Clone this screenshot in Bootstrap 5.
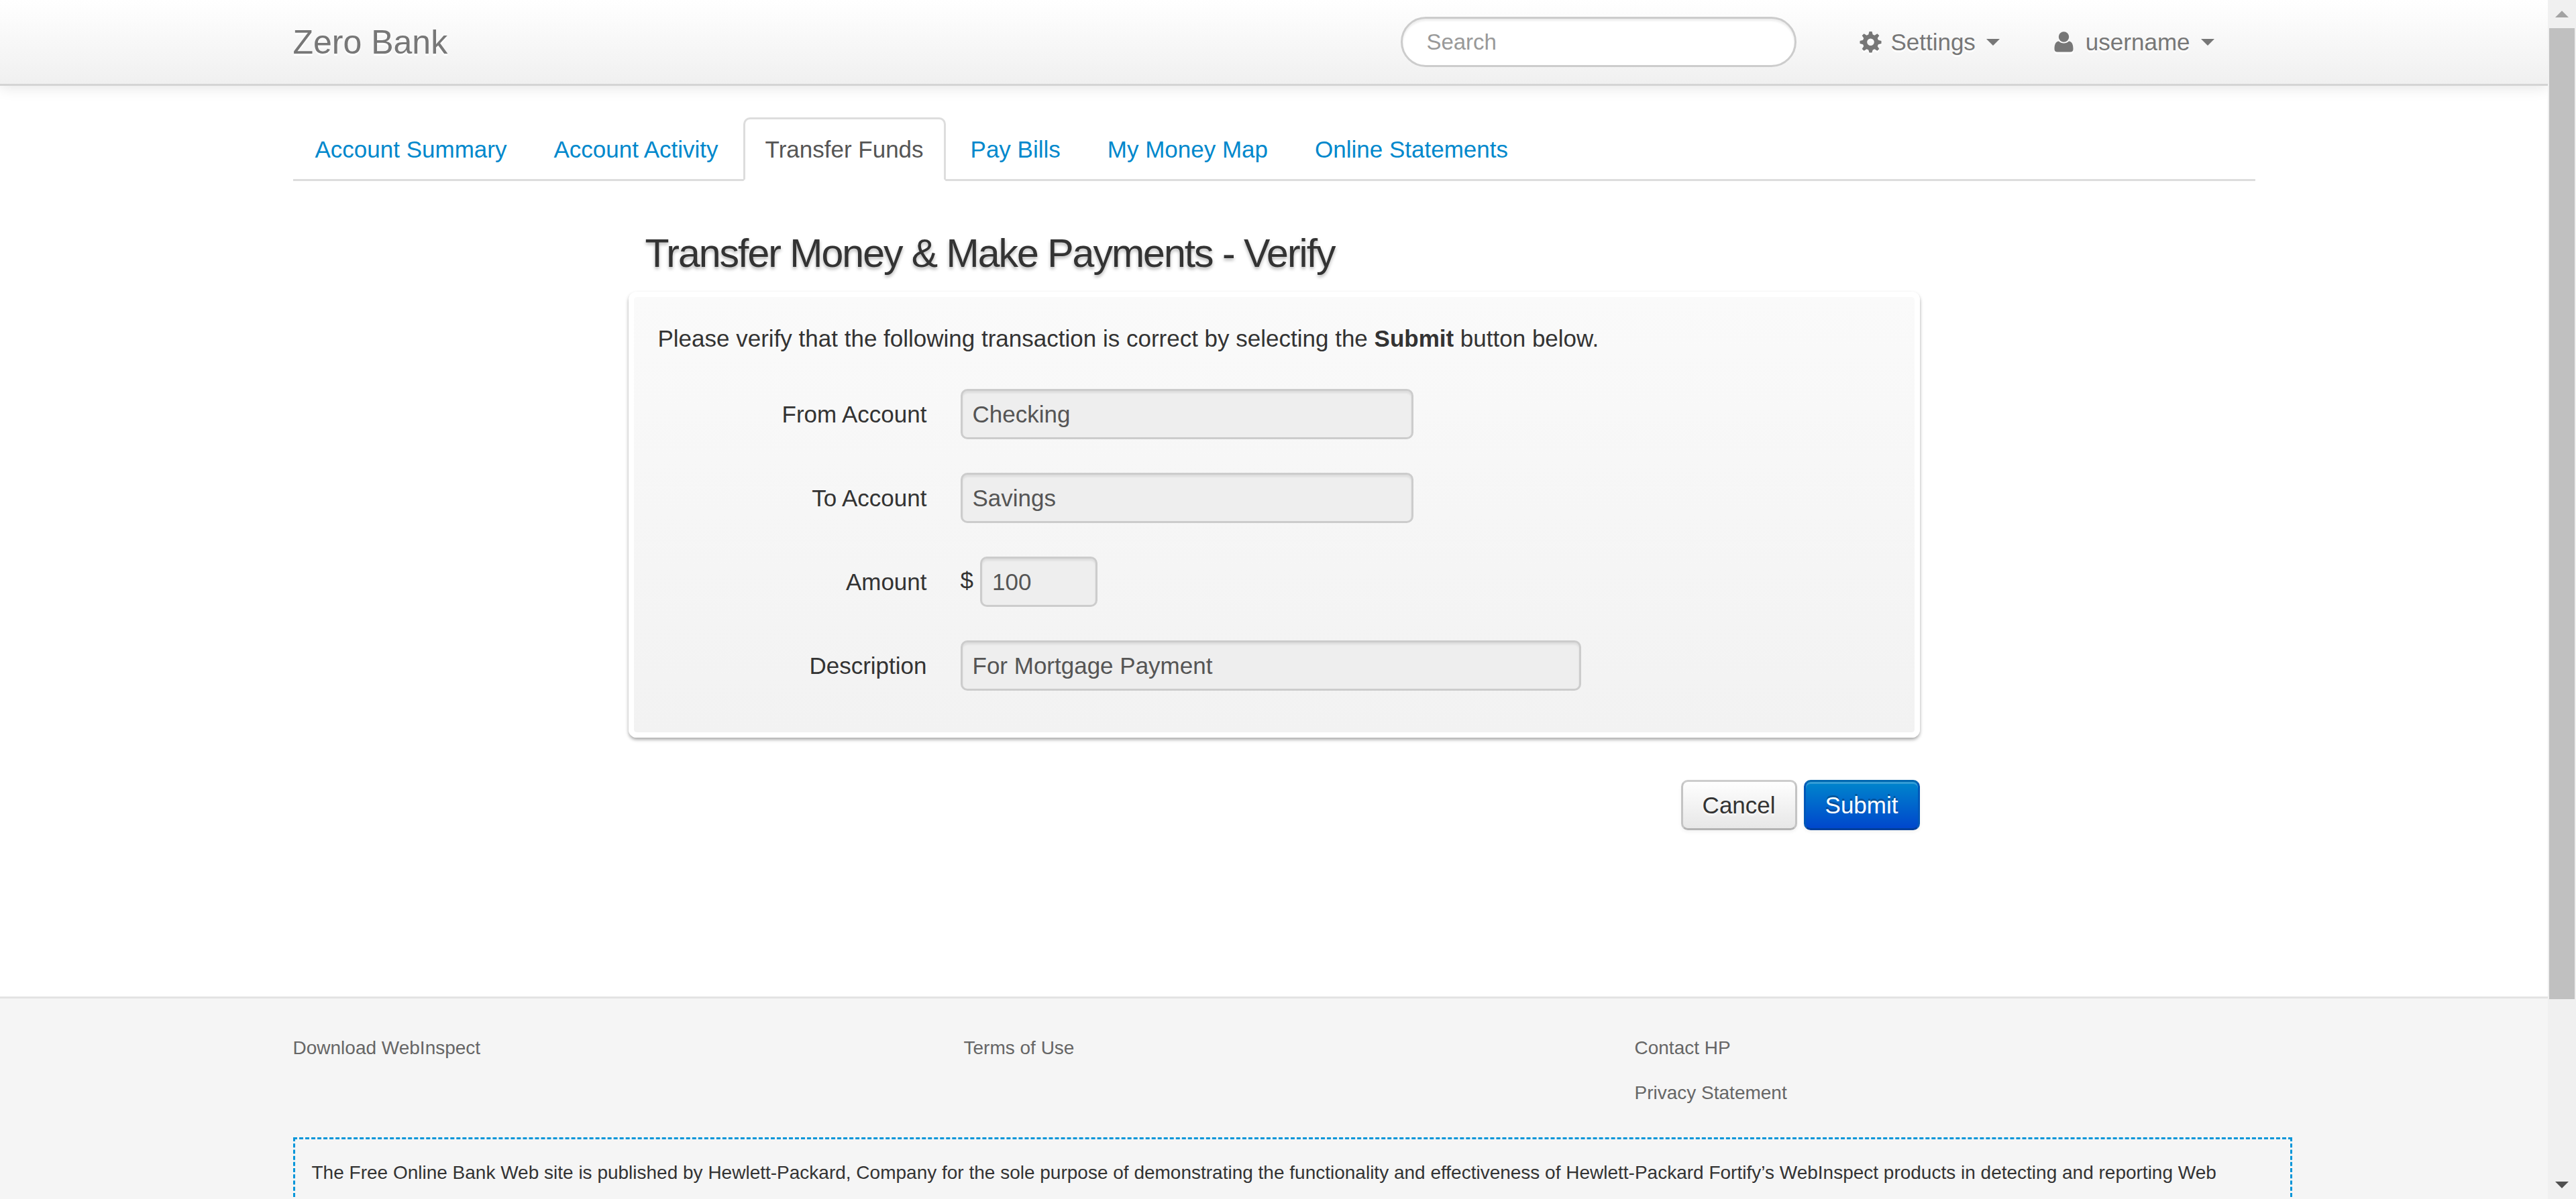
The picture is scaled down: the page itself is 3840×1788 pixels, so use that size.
<!DOCTYPE html>
<html lang="en">
<head>
<meta charset="utf-8">
<meta name="viewport" content="width=device-width, initial-scale=1">
<title>Zero - Transfer Money &amp; Make Payments - Verify</title>
<link href="https://cdn.jsdelivr.net/npm/bootstrap@5.3.0/dist/css/bootstrap.min.css" rel="stylesheet">
<style>
body { font-family: "Liberation Sans", Arial, sans-serif; font-size: 35px; line-height: 50px; color: #333; background: #fff; }
.page-wrap { max-width: 2925px; }
.page-view { min-width: 0; }

/* top bar */
.top-bar { height: 128px; padding: 0; background: linear-gradient(#fff, #f0f0f0); border-bottom: 3px solid #d4d4d4; box-shadow: 0 3px 20px rgba(0,0,0,.1); }
.top-bar .navbar-brand { font-size: 50px; line-height: 50px; padding: 0; color: #777; text-shadow: 0 3px 0 #fff; }
.top-bar .nav-link { color: #777; padding: 0; text-shadow: 0 3px 0 #fff; }
.top-bar svg { width: 35px; height: 35px; fill: #777; filter: drop-shadow(0 3px 0 #fff); }
.top-menu { gap: 77px; padding-right: 61px; }
.top-search { width: 590px; height: 75px; margin-right: 93px; padding: 0 35px; border: 3px solid #ccc; border-radius: 38px; font-size: 33px; box-shadow: inset 0 3px 3px rgba(0,0,0,.075); }
.top-search::placeholder { color: #999; opacity: 1; }
.arrow-down { border: 10px solid transparent; border-top-color: #777; border-bottom: 0; }

/* tabs */
.bank-tabs { margin-top: 47px; gap: 4px; border-bottom: 3px solid #ddd; }
.bank-tabs .nav-link { padding: 20px 30px 19px; margin-bottom: -3px; border: 3px solid transparent; border-radius: 10px 10px 0 0; color: #08c; }
.bank-tabs .nav-link.active { color: #555; border-color: #ddd #ddd #fff; }

/* transfer form */
.transfer { max-width: 1925px; padding-bottom: 248px; }
.transfer h2 { margin: 68px 0 17px; padding-left: 25px; font-size: 59px; font-weight: 400; line-height: 80px; letter-spacing: -2px; text-shadow: 0 3px 5px rgba(0,0,0,.3); }
.board { padding: 37px 36px 62px; border: 8px solid #fff; border-radius: 12px; background: linear-gradient(#fafafa, #f2f2f2) padding-box; box-shadow: 0 3px 5px rgba(0,0,0,.35); }
.board-rows { gap: 50px; }
.board-rows label { width: 401px; margin-right: 50px; text-align: right; }
.board-rows .form-control { height: 75px; padding: 0 15px; border: 3px solid #ccc; border-radius: 10px; font-size: 35px; color: #555; background: #eee; box-shadow: inset 0 3px 3px rgba(0,0,0,.075); }
.board-rows .field-md { width: 675px; }
.board-rows .field-sm { width: 175px; }
.board-rows .field-lg { width: 925px; }
.currency { margin-right: 10px; }
.actions { gap: 10px; margin-top: 63px; }
.actions .btn { padding: 10px 29px 9px; border-width: 3px; border-radius: 10px; font-size: 35px; line-height: 50px; background-origin: border-box; }
.actions .btn-cancel { color: #333; background: linear-gradient(#fff, #e6e6e6) border-box; border-color: #ccc #c4c4c4 #b3b3b3; text-shadow: 0 3px 3px rgba(255,255,255,.75); box-shadow: inset 0 3px 0 rgba(255,255,255,.2), 0 3px 5px rgba(0,0,0,.05); }
.actions .btn-send { color: #fff; background: linear-gradient(#08c, #04c) border-box; border-color: #0067b0 #0058b8 #003f9c; text-shadow: 0 -3px 0 rgba(0,0,0,.25); box-shadow: inset 0 3px 0 rgba(255,255,255,.2), 0 3px 5px rgba(0,0,0,.05); }

/* footer */
.foot { padding-top: 54px; border-top: 3px solid #e3e3e3; background: #f5f5f5; font-size: 28px; line-height: 40px; }
.foot-links { gap: 75px; }
.foot-links ul { flex: 1 1 0; }
.foot-links li { margin-bottom: 27px; }
.foot-links a { color: #666; text-decoration: none; }
.disclaimer { margin: 19px -55px 0 0; padding: 25px 25px 100px; border: 3px dashed #0095d9; line-height: 50px; }

/* window scroll bar */
.scroll-track { width: 42px; background: #f0f0f0; }
.scroll-end { height: 42px; }
.scroll-thumb { height: 81%; margin: 0 2px; background: #c0c0c0; }
.scroll-up { border: 10px solid transparent; border-bottom-color: #a3a3a3; border-top: 0; }
.scroll-down { border: 10px solid transparent; border-top-color: #505050; border-bottom: 0; }
</style>
<script src="https://cdn.jsdelivr.net/npm/bootstrap@5.3.0/dist/js/bootstrap.bundle.min.js"></script>
</head>
<body>
<div class="d-flex vh-100 overflow-hidden">
  <div class="page-view flex-grow-1 overflow-hidden">
    <nav class="navbar top-bar">
      <div class="page-wrap w-100 mx-auto d-flex align-items-center">
        <a class="navbar-brand me-auto" href="#">Zero Bank</a>
        <form role="search">
          <input class="form-control top-search" type="text" aria-label="Search" placeholder="Search">
        </form>
        <ul class="top-menu list-unstyled d-flex mb-0">
          <li><a class="nav-link d-flex align-items-center" href="#">
            <svg class="me-2" viewBox="0 0 35 35" aria-hidden="true"><path fill-rule="evenodd" d="M15.500 2h4l1.200 4.600 2.700 1.100 4-2.500 2.900 2.900-2.500 4 1.100 2.700 4.600 1.200v4l-4.600 1.200-1.100 2.700 2.500 4-2.900 2.900-4-2.500-2.700 1.100-1.200 4.100h-4l-1.200-4.100-2.700-1.100-4 2.500-2.900-2.900 2.500-4-1.100-2.700L1.500 20v-4l4.600-1.200 1.100-2.700-2.500-4 2.900-2.900 4 2.500 2.700-1.100zM17.500 12.500a5.300 5.300 0 1 0 0 10.600 5.300 5.300 0 0 0 0-10.600z"/></svg>
            <span class="ms-1 me-3">Settings</span><span class="arrow-down"></span></a></li>
          <li><a class="nav-link d-flex align-items-center" href="#">
            <svg class="me-2" viewBox="0 0 35 35" aria-hidden="true"><circle cx="18.500" cy="10" r="7.700"/><path d="M11 16.500c2 2 4.500 3 7.500 3s5.500-1 7.500-3c4.500.5 6.500 4.500 6.500 11.500 0 3-1.500 4.500-4.500 4.500H9c-3 0-4.500-1.500-4.500-4.500 0-7 2-11 6.500-11.500z"/></svg>
            <span class="ms-2 me-3">username</span><span class="arrow-down"></span></a></li>
        </ul>
      </div>
    </nav>

    <main class="page-wrap mx-auto">
      <ul class="nav nav-tabs bank-tabs">
        <li class="nav-item"><a class="nav-link" href="#">Account Summary</a></li>
        <li class="nav-item"><a class="nav-link" href="#">Account Activity</a></li>
        <li class="nav-item"><a class="nav-link active" aria-current="page" href="#">Transfer Funds</a></li>
        <li class="nav-item"><a class="nav-link" href="#">Pay Bills</a></li>
        <li class="nav-item"><a class="nav-link" href="#">My Money Map</a></li>
        <li class="nav-item"><a class="nav-link" href="#">Online Statements</a></li>
      </ul>

      <form class="transfer mx-auto">
        <h2>Transfer Money &amp; Make Payments - Verify</h2>
        <div class="board">
          <div class="board-rows d-flex flex-column">
            <p class="mb-0">Please verify that the following transaction is correct by selecting the <strong>Submit</strong> button below.</p>
            <div class="d-flex align-items-center">
              <label for="fromAccount">From Account</label>
              <input class="form-control field-md" type="text" id="fromAccount" value="Checking" readonly>
            </div>
            <div class="d-flex align-items-center">
              <label for="toAccount">To Account</label>
              <input class="form-control field-md" type="text" id="toAccount" value="Savings" readonly>
            </div>
            <div class="d-flex align-items-center">
              <label for="amount">Amount</label>
              <span class="currency pb-1">$</span>
              <input class="form-control field-sm" type="text" id="amount" value="100" readonly>
            </div>
            <div class="d-flex align-items-center">
              <label for="description">Description</label>
              <input class="form-control field-lg" type="text" id="description" value="For Mortgage Payment" readonly>
            </div>
          </div>
        </div>
        <div class="actions d-flex justify-content-end">
          <button class="btn btn-cancel" type="button">Cancel</button>
          <button class="btn btn-send" type="submit">Submit</button>
        </div>
      </form>
    </main>

    <footer class="foot">
      <div class="page-wrap mx-auto">
        <div class="foot-links d-flex">
          <ul class="list-unstyled mb-0"><li><a href="#">Download WebInspect</a></li></ul>
          <ul class="list-unstyled mb-0"><li><a href="#">Terms of Use</a></li></ul>
          <ul class="list-unstyled mb-0"><li><a href="#">Contact HP</a></li><li><a href="#">Privacy Statement</a></li></ul>
        </div>
        <div class="disclaimer">The Free Online Bank Web site is published by Hewlett-Packard, Company for the sole purpose of demonstrating the functionality and effectiveness of Hewlett-Packard Fortify’s WebInspect products in detecting and reporting Web</div>
      </div>
    </footer>
  </div>

  <div class="scroll-track d-flex flex-column flex-shrink-0" aria-hidden="true">
    <div class="scroll-end d-flex align-items-center justify-content-center"><span class="scroll-up"></span></div>
    <div class="scroll-thumb"></div>
    <div class="scroll-end d-flex align-items-center justify-content-center mt-auto"><span class="scroll-down"></span></div>
  </div>
</div>
</body>
</html>
